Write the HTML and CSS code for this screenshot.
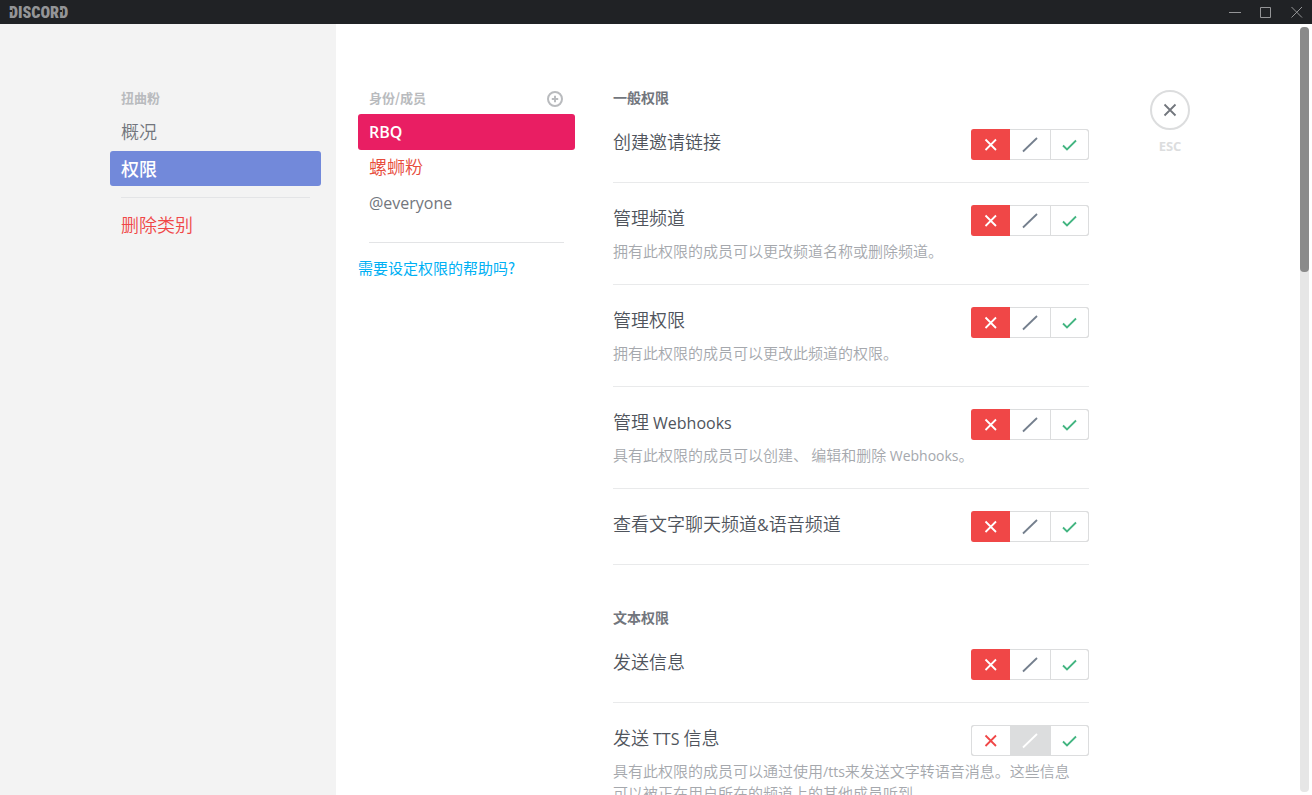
FILE: index.html
```html
<!DOCTYPE html>
<html lang="zh-CN">
<head>
<meta charset="utf-8">
<title>Discord</title>
<link rel="stylesheet" href="styles.css">
</head>
<body>
<svg class="sprite" aria-hidden="true">
  <symbol id="deny" viewBox="0 0 16 16"><path d="M2.500 2.500l10.500 10.500M13 2.500L2.500 13"/></symbol>
  <symbol id="inherit" viewBox="0 0 16 16"><path d="M1 14.500l14-13.500"/></symbol>
  <symbol id="allow" viewBox="0 0 16 16"><path d="M2 8.500l4 4 9-9"/></symbol>
</svg>
<header class="titlebar">
  <div class="wordmark"><span class="notched">D</span>ISCOR<span class="notched">D</span></div>
  <div class="window-buttons">
    <button aria-label="最小化"><svg width="12" height="12" viewBox="0 0 12 12"><path d="M0 6.500h12"/></svg></button>
    <button aria-label="最大化"><svg width="12" height="12" viewBox="0 0 12 12"><path d="M.5 1.500h10v10H.5z"/></svg></button>
    <button aria-label="关闭"><svg width="12" height="12" viewBox="0 0 12 12"><path d="M.5 1l10.500 10.500M11 1L.5 11.500"/></svg></button>
  </div>
</header>
<div class="layout">
  <nav class="sidebar">
    <div class="sidebar-list">
      <h2 class="label">扭曲粉</h2>
      <button class="nav-item">概况</button>
      <button class="nav-item selected">权限</button>
      <hr>
      <button class="nav-item danger">删除类别</button>
    </div>
  </nav>
  <main class="content">
    <section class="roles">
      <div class="roles-head">
        <h2 class="label">身份/成员</h2>
        <button class="add" aria-label="添加"><svg width="16" height="16" viewBox="0 0 16 16"><circle cx="8" cy="8" r="7"/><path d="M8 4.800v6.400M4.800 8h6.400"/></svg></button>
      </div>
      <button class="role active"><span class="latin">RBQ</span></button>
      <button class="role orange">螺蛳粉</button>
      <button class="role"><span class="latin">@everyone</span></button>
      <hr>
      <a class="help" href="#">需要设定权限的帮助吗?</a>
    </section>
    <div class="permissions">
      <section class="group">
        <h2 class="group-title">一般权限</h2>
        <div class="perm">
          <h3>创建邀请链接</h3>
          <div class="toggle" role="radiogroup" aria-label="创建邀请链接">
            <label class="deny"><input type="radio" name="p1" aria-label="拒绝" checked><svg><use href="#deny"/></svg></label>
            <label class="inherit"><input type="radio" name="p1" aria-label="继承"><svg><use href="#inherit"/></svg></label>
            <label class="allow"><input type="radio" name="p1" aria-label="允许"><svg><use href="#allow"/></svg></label>
          </div>
        </div>
        <div class="perm">
          <h3>管理频道</h3>
          <div class="toggle" role="radiogroup" aria-label="管理频道">
            <label class="deny"><input type="radio" name="p2" aria-label="拒绝" checked><svg><use href="#deny"/></svg></label>
            <label class="inherit"><input type="radio" name="p2" aria-label="继承"><svg><use href="#inherit"/></svg></label>
            <label class="allow"><input type="radio" name="p2" aria-label="允许"><svg><use href="#allow"/></svg></label>
          </div>
          <p>拥有此权限的成员可以更改频道名称或删除频道。</p>
        </div>
        <div class="perm">
          <h3>管理权限</h3>
          <div class="toggle" role="radiogroup" aria-label="管理权限">
            <label class="deny"><input type="radio" name="p3" aria-label="拒绝" checked><svg><use href="#deny"/></svg></label>
            <label class="inherit"><input type="radio" name="p3" aria-label="继承"><svg><use href="#inherit"/></svg></label>
            <label class="allow"><input type="radio" name="p3" aria-label="允许"><svg><use href="#allow"/></svg></label>
          </div>
          <p>拥有此权限的成员可以更改此频道的权限。</p>
        </div>
        <div class="perm">
          <h3>管理 <span class="latin">Webhooks</span></h3>
          <div class="toggle" role="radiogroup" aria-label="管理 Webhooks">
            <label class="deny"><input type="radio" name="p4" aria-label="拒绝" checked><svg><use href="#deny"/></svg></label>
            <label class="inherit"><input type="radio" name="p4" aria-label="继承"><svg><use href="#inherit"/></svg></label>
            <label class="allow"><input type="radio" name="p4" aria-label="允许"><svg><use href="#allow"/></svg></label>
          </div>
          <p>具有此权限的成员可以创建、 编辑和删除 <span class="latin">Webhooks</span>。</p>
        </div>
        <div class="perm">
          <h3>查看文字聊天频道<span class="latin">&amp;</span>语音频道</h3>
          <div class="toggle" role="radiogroup" aria-label="查看文字聊天频道&amp;语音频道">
            <label class="deny"><input type="radio" name="p5" aria-label="拒绝" checked><svg><use href="#deny"/></svg></label>
            <label class="inherit"><input type="radio" name="p5" aria-label="继承"><svg><use href="#inherit"/></svg></label>
            <label class="allow"><input type="radio" name="p5" aria-label="允许"><svg><use href="#allow"/></svg></label>
          </div>
        </div>
      </section>
      <section class="group">
        <h2 class="group-title">文本权限</h2>
        <div class="perm">
          <h3>发送信息</h3>
          <div class="toggle" role="radiogroup" aria-label="发送信息">
            <label class="deny"><input type="radio" name="p6" aria-label="拒绝" checked><svg><use href="#deny"/></svg></label>
            <label class="inherit"><input type="radio" name="p6" aria-label="继承"><svg><use href="#inherit"/></svg></label>
            <label class="allow"><input type="radio" name="p6" aria-label="允许"><svg><use href="#allow"/></svg></label>
          </div>
        </div>
        <div class="perm">
          <h3>发送 <span class="latin">TTS</span> 信息</h3>
          <div class="toggle" role="radiogroup" aria-label="发送 TTS 信息">
            <label class="deny"><input type="radio" name="p7" aria-label="拒绝"><svg><use href="#deny"/></svg></label>
            <label class="inherit"><input type="radio" name="p7" aria-label="继承" checked><svg><use href="#inherit"/></svg></label>
            <label class="allow"><input type="radio" name="p7" aria-label="允许"><svg><use href="#allow"/></svg></label>
          </div>
          <p>具有此权限的成员可以通过使用<span class="latin">/tts</span>来发送文字转语音消息。这些信息<br>可以被正在用户所在的频道上的其他成员听到</p>
        </div>
      </section>
    </div>
    <div class="close">
      <button class="close-button" aria-label="关闭设置"><svg width="18" height="18" viewBox="0 0 18 18"><path d="M3.500 3.500l11 11M14.500 3.500l-11 11"/></svg></button>
      <div class="esc">ESC</div>
    </div>
  </main>
  <div class="scrollbar"><div class="thumb"></div></div>
</div>
</body>
</html>
```
FILE: styles.css
```css
* { box-sizing: border-box; }
body {
  margin: 0;
  height: 100vh;
  display: flex;
  flex-direction: column;
  overflow: hidden;
  background: #fff;
  color: #4f545c;
  font: 350 18px/26px "Noto Sans CJK SC", sans-serif;
}
h2, h3, p { margin: 0; }
button { border: 0; padding: 0; background: none; font: inherit; color: inherit; cursor: pointer; }
svg { display: block; fill: none; stroke: currentColor; }
hr { width: auto; height: 1px; margin: 0 11px; border: 0; background: #e3e4e6; }
.sprite { display: none; }
.latin { font-family: "Open Sans", sans-serif; font-size: 16px; font-weight: 450; line-height: 20px; }

.titlebar {
  flex: none;
  display: flex;
  justify-content: space-between;
  align-items: center;
  height: 24px;
  padding: 0 9px;
  background: #202225;
  color: #949597;
}
.wordmark { padding-top: 2px; font: 900 16px/22px "Roboto Condensed", Roboto, sans-serif; }
.notched { position: relative; }
.notched::before {
  content: "";
  position: absolute;
  left: 0;
  top: 7px;
  width: 3px;
  height: 2px;
  background: #202225;
}
.window-buttons { display: flex; gap: 19px; }

.layout { flex: 1; display: grid; grid-template-columns: minmax(0, 336fr) minmax(0, 964fr) 12px; min-height: 0; }
.sidebar {
  display: flex;
  justify-content: flex-end;
  padding: 64px 15px 0;
  background: #f3f3f3;
}
.sidebar-list { display: flex; flex-direction: column; width: 211px; }
.label { font-size: 13px; line-height: 20px; font-weight: 700; color: #b9bbbe; }
.sidebar-list .label { padding: 0 11px; margin-bottom: 6px; }
.nav-item { height: 35px; padding: 0 11px 2px; margin-bottom: 2px; border-radius: 3px; text-align: left; color: #72767d; }
.nav-item.selected { background: #7289da; color: #fff; font-weight: 500; }
.nav-item.danger { color: #f04747; }
.sidebar-list hr { margin: 9px 11px; }

.content { display: flex; padding: 64px 0 0 22px; overflow: hidden; }
.roles { flex: 0 0 217px; display: flex; flex-direction: column; margin-right: 38px; }
.roles-head { display: flex; justify-content: space-between; padding: 0 12px 0 11px; margin-bottom: 6px; }
.add { color: #b9bbbe; }
.add svg { stroke-width: 2; margin-top: 2px; }
.role { flex: none; height: 35px; padding: 0 11px 4px; border-radius: 3px; text-align: left; color: #72767d; }
.role.active { height: 36px; background: #e91e63; color: #fff; }
.role.active .latin { font-weight: 600; }
.role.orange { color: #e74c3c; }
.roles hr { margin: 22px 11px 13px; }
.help { color: #00b0f4; text-decoration: none; font-size: 15px; line-height: 24px; font-weight: 400; }

.permissions { flex: 0 1 476px; margin-right: 61px; }
.group { margin-bottom: 43px; }
.group-title { margin-bottom: 23px; font-size: 14px; line-height: 18px; font-weight: 700; color: #72767d; }
.perm {
  display: grid;
  grid-template-columns: 1fr auto;
  padding-bottom: 22px;
  margin-bottom: 22px;
  border-bottom: 1px solid #e9eaeb;
}
.perm:last-child { margin-bottom: 0; }
.perm h3 { font-size: 18px; line-height: 24px; font-weight: 350; }
.perm p { grid-column: 1 / -1; margin-top: 4px; font-size: 15px; line-height: 22px; color: #a5a8ad; white-space: nowrap; }
.perm p .latin { font-size: 14px; }

.toggle { display: flex; width: 118px; height: 31px; border: 1px solid #dcddde; border-radius: 3px; }
.toggle label { flex: 1; display: flex; align-items: center; justify-content: center; margin: -1px 0; border: 1px solid #dcddde; border-width: 1px 0; cursor: pointer; }
.toggle svg { width: 16px; height: 16px; stroke-width: 1.8; }
.toggle input { appearance: none; width: 0; height: 0; margin: 0; }
.toggle .deny { margin-left: -1px; border-left-width: 1px; border-radius: 3px 0 0 3px; color: #f04747; }
.toggle .inherit { flex: 0 0 41px; border-right-width: 1px; color: #747f8d; }
.toggle .allow { margin-right: -1px; border-right-width: 1px; border-radius: 0 3px 3px 0; color: #43b581; }
.deny:has(:checked) { background: #f04747; }
.deny:not(:has(:checked)) + .inherit { background: #dcddde; }
.toggle label:has(:checked) { color: #fff; }
.toggle .deny:has(:checked) { border-color: #f04747; }

.close { flex: none; margin-top: 2px; text-align: center; }
.close-button { display: grid; place-items: center; width: 40px; height: 40px; border: 2px solid #dcddde; border-radius: 50%; color: #72767d; }
.close-button svg { stroke-width: 1.8; }
.esc { margin-top: 6px; font: 700 13px/20px "Open Sans", sans-serif; color: #dcddde; }

.scrollbar { margin: 3px 3px 3px 0; border-radius: 4px; background: #e6e6e6; }
.thumb { height: 32%; border-radius: 4px; background: #8a8a8a; }
```
